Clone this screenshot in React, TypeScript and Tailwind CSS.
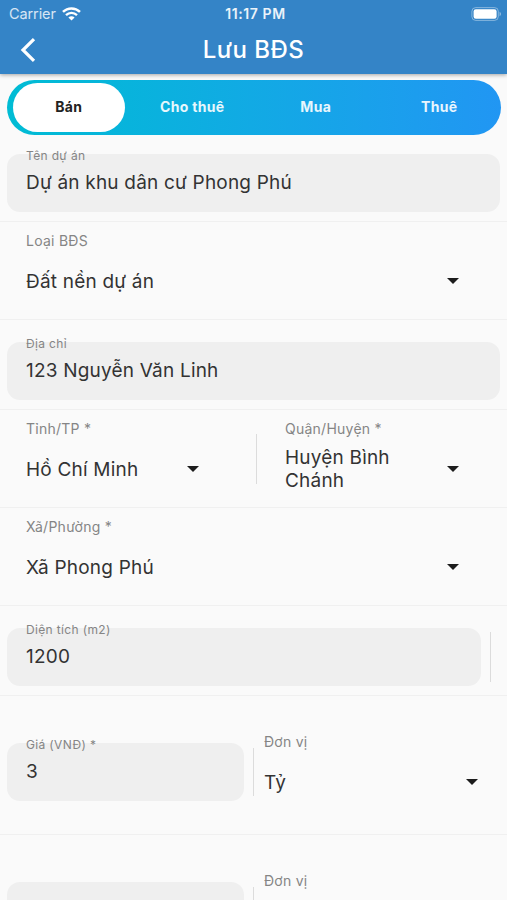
import React, { useState } from "react";
import clsx from "clsx";

const TABS = ["Bán", "Cho thuê", "Mua", "Thuê"];

function WifiIcon() {
  return (
    <svg width="19" height="14" viewBox="0 0 19 14" fill="none" stroke="white">
      <path d="M1 4.9C5.8 0.2 13.2 0.2 18 4.9" strokeWidth="2.5" />
      <path d="M4 8.1C7.2 5.1 11.8 5.1 15 8.1" strokeWidth="2.4" />
      <path d="M9.5 13.6L6.4 10.4C8.2 8.8 10.8 8.8 12.6 10.4Z" fill="white" stroke="none" />
    </svg>
  );
}

function BatteryIcon() {
  return (
    <svg width="31" height="14" viewBox="0 0 31 14" fill="none">
      <rect x="0.9" y="0.6" width="26.4" height="12.8" rx="3.8" stroke="white" strokeOpacity="0.4" />
      <rect x="2.6" y="2.3" width="23" height="9.4" rx="2.2" fill="white" />
      <path d="M28.6 4.8C30.4 5.6 30.4 8.4 28.6 9.2Z" fill="white" fillOpacity="0.5" />
    </svg>
  );
}

function Caret() {
  return (
    <svg width="12" height="6" viewBox="0 0 12 6" className="shrink-0">
      <path d="M0 0H12L6 6Z" fill="#1c1c1c" />
    </svg>
  );
}

function Row({ className, children }: { className: string; children: React.ReactNode }) {
  return <div className={clsx("flex shrink-0 border-b border-[#f0f0f0] pl-[7px]", className)}>{children}</div>;
}

function TextField({ label, value, className }: { label: string; value: string; className: string }) {
  return (
    <div className={clsx("h-[58px] rounded-[13px] bg-[#efefef] pl-[19px]", className)}>
      <div className="-mt-[5px] h-[13px] whitespace-nowrap text-[12px] leading-[14px] tracking-[0.35px] text-[#858585]">{label}</div>
      <div className="mt-[9px] whitespace-nowrap text-[19px] leading-6 tracking-[0.2px] text-[#333]">{value}</div>
    </div>
  );
}

function SelectField({ label, value, className }: { label: string; value: string; className: string }) {
  return (
    <div className={className}>
      <div className="h-5 whitespace-nowrap text-[14px] leading-5 tracking-[0.25px] text-[#858585]">{label}</div>
      <div className="mt-[7px] flex h-[46px] items-center justify-between">
        <span className="max-w-[140px] text-[19px] leading-[23px] tracking-[0.2px] text-[#333]">{value}</span>
        <Caret />
      </div>
    </div>
  );
}

function Divider({ className }: { className: string }) {
  return <div className={clsx("w-px shrink-0 bg-[#dcdcdc]", className)} />;
}

export default function App() {
  const [tab, setTab] = useState(0);

  return (
    <div className="flex h-[900px] w-[507px] flex-col overflow-hidden bg-[#fafafa] font-['Inter','Roboto',sans-serif]">
      <header className="z-10 h-[74px] shrink-0 bg-[#3484c7] text-white shadow-[0_1px_4px_rgba(0,0,0,0.35)]">
        <div className="grid h-[27px] grid-cols-3 items-center pl-[9px] pr-[5px]">
          <div className="flex items-center gap-[6px] text-[14.5px] tracking-[-0.1px] text-white/80">
            Carrier
            <WifiIcon />
          </div>
          <div className="text-center text-[14px] font-semibold tracking-[0.6px] text-white/90">11:17 PM</div>
          <div className="flex justify-end">
            <BatteryIcon />
          </div>
        </div>
        <div className="grid h-[46px] grid-cols-3 items-center">
          <button className="pl-[20px]">
            <svg width="16" height="24" viewBox="0 0 16 24" fill="none" stroke="white" strokeWidth="3.2">
              <path d="M14 1.2L3 12L14 22.8" />
            </svg>
          </button>
          <h1 className="text-center text-[24px] font-medium tracking-[0.5px]">Lưu BĐS</h1>
        </div>
      </header>

      <nav className="ml-[7px] mr-[6px] mt-[6px] flex h-[55px] shrink-0 rounded-[28px] bg-gradient-to-r from-[#00bcd4] to-[#2196f3] py-[3px]">
        {TABS.map((name, i) => (
          <button key={name} onClick={() => setTab(i)} className="h-full flex-1 px-[6px]">
            <span
              className={clsx(
                "flex h-full items-center justify-center rounded-full pb-[2px] text-[14px] font-bold tracking-[0.3px]",
                tab === i ? "bg-white text-[#222]" : "text-white/90"
              )}
            >
              {name}
            </span>
          </button>
        ))}
      </nav>

      <Row className="h-[87px] pt-[19px]">
        <TextField label="Tên dự án" value="Dự án khu dân cư Phong Phú" className="w-[493px]" />
      </Row>
      <Row className="h-[98px] pt-[9px]">
        <SelectField label="Loại BĐS" value="Đất nền dự án" className="ml-[19px] w-[433px]" />
      </Row>
      <Row className="h-[90px] pt-[22px]">
        <TextField label="Địa chỉ" value="123 Nguyễn Văn Linh" className="w-[493px]" />
      </Row>
      <Row className="h-[98px] pt-[9px]">
        <SelectField label="Tỉnh/TP *" value="Hồ Chí Minh" className="ml-[19px] w-[173px]" />
        <Divider className="ml-[57px] mt-[15px] h-[50px]" />
        <SelectField label="Quận/Huyện *" value="Huyện Bình Chánh" className="ml-[28px] w-[174px]" />
      </Row>
      <Row className="h-[98px] pt-[9px]">
        <SelectField label="Xã/Phường *" value="Xã Phong Phú" className="ml-[19px] w-[433px]" />
      </Row>
      <Row className="h-[90px] pt-[22px]">
        <TextField label="Diện tích (m2)" value="1200" className="w-[474px]" />
        <Divider className="ml-[9px] mt-1 h-[50px]" />
      </Row>
      <Row className="h-[139px] pt-[36px]">
        <TextField label="Giá (VNĐ) *" value="3" className="mt-[11px] w-[237px]" />
        <Divider className="ml-[9px] mt-4 h-[48px]" />
        <SelectField label="Đơn vị" value="Tỷ" className="ml-[10px] w-[214px]" />
      </Row>
      <Row className="h-[139px] pt-[36px]">
        <TextField label="" value="" className="mt-[11px] w-[237px]" />
        <Divider className="ml-[9px] mt-4 h-[48px]" />
        <SelectField label="Đơn vị" value="" className="ml-[10px] w-[214px]" />
      </Row>
    </div>
  );
}
